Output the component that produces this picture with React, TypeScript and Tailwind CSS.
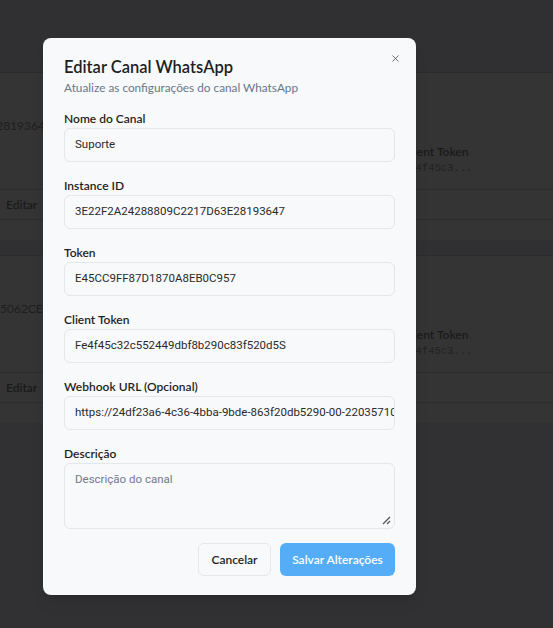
import { X } from "lucide-react";

const fields = [
  { label: "Nome do Canal", value: "Suporte" },
  { label: "Instance ID", value: "3E22F2A24288809C2217D63E28193647" },
  { label: "Token", value: "E45CC9FF87D1870A8EB0C957" },
  { label: "Client Token", value: "Fe4f45c32c552449dbf8b290c83f520d5S" },
  { label: "Webhook URL (Opcional)", value: "https://24df23a6-4c36-4bba-9bde-863f20db5290-00-22035710e3x1v.picard.replit.dev/webhook" },
];

function ChannelCard({ id }: { id: string }) {
  return (
    <div className="bg-[#343434] h-[167px] flex flex-col">
      <div className="flex-1 flex">
        <div className="w-[220px] pt-[44px] text-[12px] text-[#1e1e1e] -ml-[175px]">{id}</div>
        <div className="flex-1" />
        <div className="w-[150px] pt-[70px] text-[12px] leading-[17px] text-[#1a1a1a]">
          <div className="font-semibold">Client Token</div>
          <div className="font-['Liberation_Mono',monospace] text-[10.5px] text-[#222]">Fe4f45c3...</div>
        </div>
      </div>
      <div className="h-[31px] border-y border-[#2c2c2c] flex items-center text-[12px] font-semibold text-[#1a1a1a]">
        <span className="pl-[6px]">Editar</span>
      </div>
      <div className="h-[20px]" />
    </div>
  );
}

export default function App() {
  return (
    <div className="relative h-[628px] w-[553px] overflow-hidden bg-[#313133] font-['Lato',sans-serif]">
      <div className="h-[73px] bg-[#303032] border-b border-[#2b2b2d]" />
      <ChannelCard id="3E22F2A24288809C2217D63E28193647" />
      <div className="h-[16px] bg-[#303032] border-b border-[#2c2c2c]" />
      <ChannelCard id="7B1C09D2E4A3F58B61C0A9E25062CE0A" />

      <div className="absolute left-[43px] top-[38px] w-[373px] rounded-[8px] bg-[#f8f9fa] shadow-lg px-[21px] pt-[18px] pb-[19px]">
        <button className="absolute right-[15px] top-[15px] text-[#5f6368]">
          <X size={11} strokeWidth={2} />
        </button>
        <h2 className="text-[16.5px] font-semibold text-[#1c1f24] leading-[22px]">Editar Canal WhatsApp</h2>
        <p className="text-[11.8px] text-[#687789] leading-[16px] mt-[2px]">Atualize as configurações do canal WhatsApp</p>

        <div className="mt-[14px] flex flex-col gap-[15px]">
          {fields.map((f) => (
            <div key={f.label}>
              <div className="text-[12px] font-semibold text-[#1c1f24] leading-[18px]">{f.label}</div>
              <div className="h-[34px] rounded-[6px] border border-[#e3e6ea] bg-[#f8f9fa] flex items-center px-[10px] overflow-hidden">
                <span className="font-['Roboto',sans-serif] text-[11.5px] text-[#2a2a2a] whitespace-nowrap">{f.value}</span>
              </div>
            </div>
          ))}
          <div>
            <div className="text-[12px] font-semibold text-[#1c1f24] leading-[18px]">Descrição</div>
            <div className="relative h-[66px] rounded-[6px] border border-[#e3e6ea] bg-[#f8f9fa] px-[10px] pt-[5px] leading-[16px]">
              <span className="font-['Roboto',sans-serif] text-[11.5px] text-[#6f7a8a]">Descrição do canal</span>
              <svg className="absolute right-[3px] bottom-[3px]" width="9" height="9" viewBox="0 0 9 9">
                <path d="M8 1 L1 8 M8 5 L5 8" stroke="#555" strokeWidth="1.3" />
              </svg>
            </div>
          </div>
        </div>

        <div className="mt-[14px] flex justify-end gap-[9px]">
          <button className="h-[33px] w-[73px] rounded-[6px] border border-[#e3e6ea] bg-[#f8f9fa] text-[12px] font-semibold text-[#1c1f24]">
            Cancelar
          </button>
          <button className="h-[33px] w-[115px] rounded-[6px] bg-[#55adf7] text-[12px] font-semibold text-white">
            Salvar Alterações
          </button>
        </div>
      </div>
    </div>
  );
}
